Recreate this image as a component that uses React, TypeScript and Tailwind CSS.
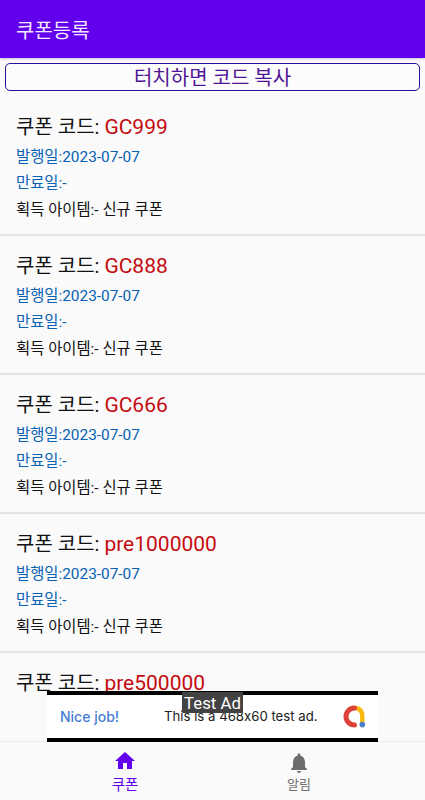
import React from "react";

const coupons = ["GC999", "GC888", "GC666", "pre1000000"];

function CodeLine({ code }: { code: string }) {
  return (
    <div className="h-[31px] text-[20px] leading-[31px] text-[#111]">
      쿠폰 코드: <span className="text-[21px] text-[#c50b0f]">{code}</span>
    </div>
  );
}

function CouponRow({ code }: { code: string }) {
  return (
    <li className="h-[139px] shrink-0 border-b-2 border-[#e4e4e4] pl-4 pt-[15px] whitespace-nowrap">
      <CodeLine code={code} />
      <div className="h-[26px] text-[15.4px] leading-[28px] text-[#0762b5]">발행일:2023-07-07</div>
      <div className="h-[26px] text-[15.4px] leading-[29px] text-[#0762b5]">만료일:-</div>
      <div className="h-[26px] text-[15.4px] leading-[31px] text-[#111]">획득 아이템:- 신규 쿠폰</div>
    </li>
  );
}

function AdMobLogo() {
  return (
    <svg className="ml-auto mr-[12px] h-[23px] w-[23px]" viewBox="0 0 23 23" fill="none">
      <path d="M11.5 3 C17 3 19.3 6.5 19.3 11 V19" stroke="#f9b90a" strokeWidth="4.4" />
      <path d="M11.5 3 A8.5 8.5 0 1 0 11.5 20" stroke="#dc4338" strokeWidth="5" strokeLinecap="round" />
      <circle cx="19.3" cy="19.6" r="2.8" fill="#4480cf" />
    </svg>
  );
}

export default function App() {
  return (
    <div className="flex h-[800px] w-[425px] flex-col overflow-hidden bg-[#fafafa] font-[Roboto,'Noto_Sans_CJK_KR',sans-serif]">
      <header className="flex h-[58px] shrink-0 items-center bg-[#6200ee] pl-4 pt-[4px] text-[20px] text-[#f4eaff] shadow-[0_1px_2px_#cfc5df]">
        쿠폰등록
      </header>
      <button className="mx-[5px] mt-[5px] flex h-[28px] shrink-0 items-center justify-center rounded-[5px] border border-[#25109a] bg-[#fcfcfc] pt-[2px] text-[20px] leading-[26px] text-[#501596]">
        터치하면 코드 복사
      </button>
      <ul className="mt-[6px] flex h-[594px] shrink-0 flex-col">
        {coupons.map((code) => (
          <CouponRow key={code} code={code} />
        ))}
        <li className="h-[38px] shrink-0 pl-4 pt-[15px] whitespace-nowrap">
          <CodeLine code="pre500000" />
        </li>
      </ul>
      <aside className="relative z-10 ml-[47px] flex h-[51px] w-[331px] shrink-0 items-center border-y-4 border-black bg-white font-[Inter,sans-serif] [font-feature-settings:'calt'_0]">
        <span className="w-[117px] pl-[13px] text-[14px] font-medium whitespace-nowrap text-[#4480d1]">Nice job!</span>
        <span className="text-[13.2px] text-[#202020] whitespace-nowrap">This is a 468x60 test ad.</span>
        <AdMobLogo />
        <span className="absolute left-[135px] top-[-3px] h-[21px] w-[61px] rounded-[1px] bg-[#424242] text-center font-[Roboto] text-[16.8px] leading-[22px] text-white whitespace-nowrap">
          Test Ad
        </span>
      </aside>
      <nav className="-mt-px grid h-[59px] shrink-0 grid-cols-[250px_98px_77px] border-t border-[#ededed] text-[14.5px]">
        <div className="flex flex-col items-center pt-[7px] text-[#6200ee]">
          <svg className="h-6 w-6" viewBox="0 0 24 24" fill="currentColor">
            <path d="M10 20v-6h4v6h5v-8h3L12 3 2 12h3v8z" />
          </svg>
          <span className="leading-[26px]">쿠폰</span>
        </div>
        <div className="flex flex-col items-center pt-[9px] text-[#6d6d6d]">
          <svg className="h-6 w-6" viewBox="0 0 24 24" fill="currentColor">
            <path d="M12 22c1.1 0 2-.9 2-2h-4c0 1.1.9 2 2 2m6-6v-5c0-3.07-1.64-5.64-4.5-6.32V4c0-.83-.67-1.5-1.5-1.5s-1.5.67-1.5 1.5v.68C7.63 5.36 6 7.92 6 11v5l-2 2v1h16v-1z" />
          </svg>
          <span className="text-[13px] leading-[20px]">알림</span>
        </div>
      </nav>
    </div>
  );
}
